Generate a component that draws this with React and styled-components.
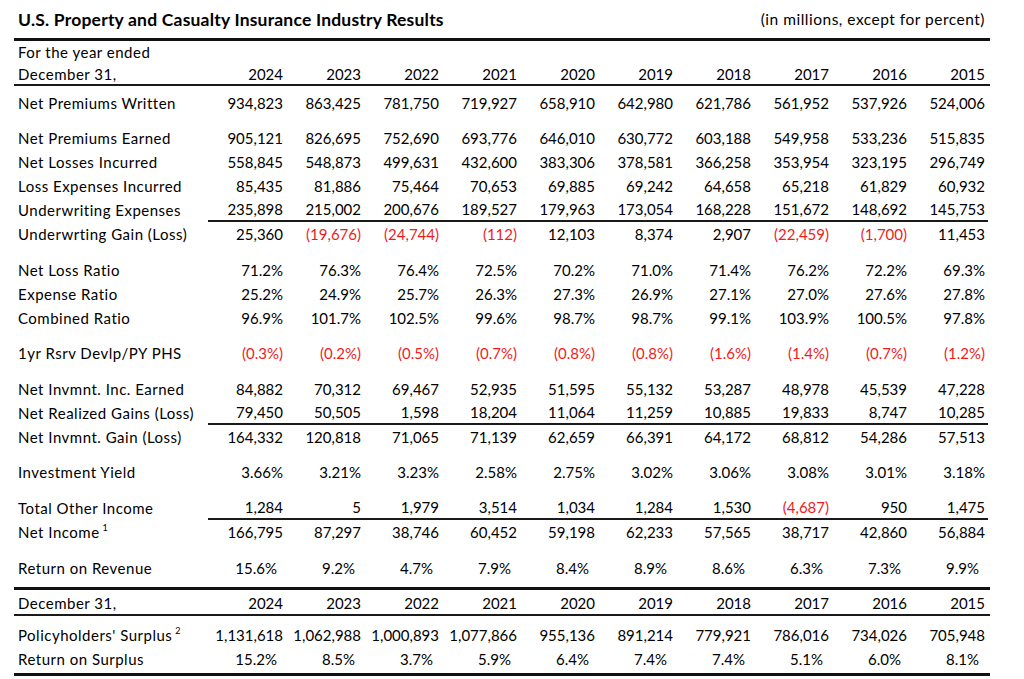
import React from 'react'
import styled, { createGlobalStyle } from 'styled-components'

const GlobalStyle = createGlobalStyle`
  body {
    margin: 0;
    background: #fff;
    color: #000;
    font-family: Lato, "Open Sans", sans-serif;
  }
`

const Page = styled.div`
  width: 976px;
  padding: 0 0 0 14px;
`

const TitleBar = styled.div`
  display: flex;
  justify-content: space-between;
  align-items: center;
  height: 38px;
  padding: 0 5px 0 4px;
  border-bottom: 3px solid #111;
`

const Title = styled.h1`
  margin: 0;
  font-size: 17.5px;
  font-weight: 700;
  letter-spacing: 0.2px;
`

const Units = styled.span`
  font-size: 15.5px;
  letter-spacing: 0.5px;
`

const Row = styled.div`
  display: grid;
  grid-template-columns: 194px repeat(10, 78px);
  height: ${p => p.$height || 24}px;
  margin-top: ${p => p.$gap || 0}px;
  align-items: center;
  font-size: 15px;
  border-bottom: ${p => (p.$rule ? `${p.$rule}px solid #1a1a1a` : 'none')};
`

const Label = styled.div`
  padding-left: 4px;
  white-space: nowrap;
  letter-spacing: 0.5px;

  sup {
    font-size: 9px;
    vertical-align: 7px;
    line-height: 0;
    margin-left: 3px;
  }
`

const Cell = styled.div`
  text-align: right;
  padding-right: ${p => (p.$inset ? 9 : 3)}px;
  white-space: nowrap;
  height: 100%;
  display: flex;
  align-items: center;
  justify-content: flex-end;
  box-sizing: border-box;
  color: ${p => (p.$neg ? '#ee1c1c' : '#000')};
  border-bottom: ${p => (p.$line ? '2px solid #1a1a1a' : 'none')};
`

const Rule = styled.div`
  height: 0;
  margin-top: ${p => p.$gap || 0}px;
  border-bottom: 3px solid #111;
`

const years = ['2024', '2023', '2022', '2021', '2020', '2019', '2018', '2017', '2016', '2015']

const split = s => s.split(' ')

const rows = [
  { label: 'Net Premiums Written', gap: 5, v: '934,823 863,425 781,750 719,927 658,910 642,980 621,786 561,952 537,926 524,006' },
  { label: 'Net Premiums Earned', gap: 11, v: '905,121 826,695 752,690 693,776 646,010 630,772 603,188 549,958 533,236 515,835' },
  { label: 'Net Losses Incurred', v: '558,845 548,873 499,631 432,600 383,306 378,581 366,258 353,954 323,195 296,749' },
  { label: 'Loss Expenses Incurred', v: '85,435 81,886 75,464 70,653 69,885 69,242 64,658 65,218 61,829 60,932' },
  { label: 'Underwriting Expenses', line: true, v: '235,898 215,002 200,676 189,527 179,963 173,054 168,228 151,672 148,692 145,753' },
  { label: 'Underwrting Gain (Loss)', v: '25,360 (19,676) (24,744) (112) 12,103 8,374 2,907 (22,459) (1,700) 11,453' },
  { label: 'Net Loss Ratio', gap: 12, v: '71.2% 76.3% 76.4% 72.5% 70.2% 71.0% 71.4% 76.2% 72.2% 69.3%' },
  { label: 'Expense Ratio', v: '25.2% 24.9% 25.7% 26.3% 27.3% 26.9% 27.1% 27.0% 27.6% 27.8%' },
  { label: 'Combined Ratio', v: '96.9% 101.7% 102.5% 99.6% 98.7% 98.7% 99.1% 103.9% 100.5% 97.8%' },
  { label: '1yr Rsrv Devlp/PY PHS', gap: 11, v: '(0.3%) (0.2%) (0.5%) (0.7%) (0.8%) (0.8%) (1.6%) (1.4%) (0.7%) (1.2%)' },
  { label: 'Net Invmnt. Inc. Earned', gap: 12, v: '84,882 70,312 69,467 52,935 51,595 55,132 53,287 48,978 45,539 47,228' },
  { label: 'Net Realized Gains (Loss)', line: true, v: '79,450 50,505 1,598 18,204 11,064 11,259 10,885 19,833 8,747 10,285' },
  { label: 'Net Invmnt. Gain (Loss)', v: '164,332 120,818 71,065 71,139 62,659 66,391 64,172 68,812 54,286 57,513' },
  { label: 'Investment Yield', gap: 11, v: '3.66% 3.21% 3.23% 2.58% 2.75% 3.02% 3.06% 3.08% 3.01% 3.18%' },
  { label: 'Total Other Income', gap: 12, line: true, v: '1,284 5 1,979 3,514 1,034 1,284 1,530 (4,687) 950 1,475' },
  { label: 'Net Income', note: 1, v: '166,795 87,297 38,746 60,452 59,198 62,233 57,565 38,717 42,860 56,884' },
  { label: 'Return on Revenue', gap: 12, inset: true, v: '15.6% 9.2% 4.7% 7.9% 8.4% 8.9% 8.6% 6.3% 7.3% 9.9%' },
]

const surplus = [
  { label: 'Policyholders\' Surplus', note: 2, gap: 7, v: '1,131,618 1,062,988 1,000,893 1,077,866 955,136 891,214 779,921 786,016 734,026 705,948' },
  { label: 'Return on Surplus', inset: true, v: '15.2% 8.5% 3.7% 5.9% 6.4% 7.4% 7.4% 5.1% 6.0% 8.1%' },
]

const DataRow = ({ row }) => (
  <Row $gap={row.gap}>
    <Label>
      {row.label}
      {row.note && <sup>{row.note}</sup>}
    </Label>
    {split(row.v).map((val, i) => (
      <Cell key={i} $line={row.line} $inset={row.inset} $neg={val.startsWith('(')}>
        {val}
      </Cell>
    ))}
  </Row>
)

export default function App() {
  return (
    <Page>
      <GlobalStyle />
      <TitleBar>
        <Title>U.S. Property and Casualty Insurance Industry Results</Title>
        <Units>(in millions, except for percent)</Units>
      </TitleBar>

      <Row $height={22}>
        <Label>For the year ended</Label>
      </Row>
      <Row $height={21} $rule={2}>
        <Label>December 31,</Label>
        {years.map(y => <Cell key={y}>{y}</Cell>)}
      </Row>

      {rows.map(r => <DataRow key={r.label} row={r} />)}

      <Rule $gap={7} />
      <Row $gap={2} $height={22} $rule={2}>
        <Label>December 31,</Label>
        {years.map(y => <Cell key={y}>{y}</Cell>)}
      </Row>

      {surplus.map(r => <DataRow key={r.label} row={r} />)}

      <Rule $gap={2} />
    </Page>
  )
}
